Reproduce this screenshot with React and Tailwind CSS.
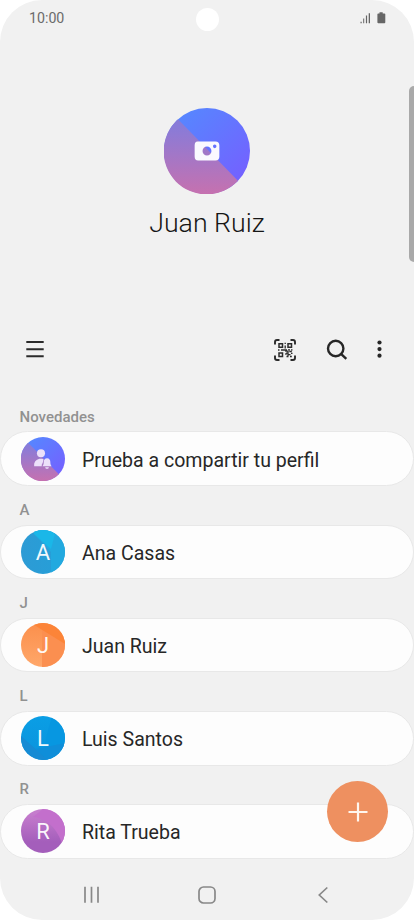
import React from 'react';

const BlueAvatar = () => (
  <>
    <defs>
      <linearGradient id="profileBlue" x1="0" y1="0" x2="1" y2="1">
        <stop offset="0.1" stopColor="#5588ff" />
        <stop offset="0.85" stopColor="#7362ff" />
      </linearGradient>
      <linearGradient id="profilePink" x1="0" y1="0" x2="0" y2="1">
        <stop offset="0.1" stopColor="#897bd8" />
        <stop offset="1" stopColor="#c671af" />
      </linearGradient>
    </defs>
    <circle cx="43.5" cy="43.5" r="43.5" fill="url(#profileBlue)" />
    <path d="M14.2 11.4A43.5 43.5 0 1 0 74.8 73.7Z" fill="url(#profilePink)" />
  </>
);

const PersonAvatar = () => (
  <svg viewBox="0 0 87 87" className="h-full w-full">
    <BlueAvatar />
    <g fill="#ece0fa">
      <circle cx="39.5" cy="32" r="8" />
      <path d="M26 58v-3c0-7 6-12 13-12 2 0 4 .3 5.500 1-.5 4-1.500 8-3.500 11v3Z" />
      <path d="M51.500 42c-4.500 0-6.500 3.500-6.500 7.500 0 4-.5 5.500-2.500 8.500h18c-2-3-2.500-4.500-2.500-8.500 0-4-2-7.500-6.500-7.500Z" />
      <path d="M48 60h7c0 2-1.500 3-3.500 3s-3.500-1-3.500-3Z" />
    </g>
  </svg>
);

const sections = [
  { header: 'Novedades', name: 'Prueba a compartir tu perfil' },
  {
    header: 'A',
    name: 'Ana Casas',
    initial: 'A',
    color: 'bg-[linear-gradient(90deg,#2d9bd5,#259fd8)]',
    facets: [
      { d: 'M13 4 30 22 30 44H44V0H13Z', fill: '#22a9df' },
      { d: 'M13 4 30 19 35 0H13Z', fill: '#1ab7e8' },
    ],
  },
  {
    header: 'J',
    name: 'Juan Ruiz',
    initial: 'J',
    color: 'bg-[linear-gradient(180deg,#fb8f4c,#ffa76a)]',
    facets: [
      { d: 'M21 6V44H44V18Z', fill: '#fb8f50' },
      { d: 'M10 0 44 21V0Z', fill: '#fc8438' },
    ],
  },
  {
    header: 'L',
    name: 'Luis Santos',
    initial: 'L',
    color: 'bg-[linear-gradient(180deg,#0a9ee5,#0b93dc)]',
    facets: [
      { d: 'M31 0 25 22 22 44H44V0Z', fill: '#0797e1' },
      { d: 'M0 20 27 44H0Z', fill: '#168bd4' },
      { d: 'M15 33Q30 30 44 27V44H27Z', fill: '#0f8ed9' },
    ],
  },
  {
    header: 'R',
    name: 'Rita Trueba',
    initial: 'R',
    color: 'bg-[linear-gradient(180deg,#c57ccd_10%,#a45ebb_75%)]',
    facets: [{ d: 'M12 8Q32 10 41 34L44 30V0H22Z', fill: '#c36fcc' }],
  },
];

const ContactSection = ({ header, name, initial, color, facets }) => (
  <section className="h-[93.2px]">
    <h2 className="h-[39.2px] pt-[14.300px] pl-[19.500px] text-[15px] leading-5 font-medium text-[#919191]">
      {header}
    </h2>
    <div className="flex h-[54.500px] items-center rounded-full border border-[#e8e8e8] bg-[#fdfdfd] pl-[20px]">
      {initial ? (
        <div className={`grid size-[44px] shrink-0 overflow-hidden rounded-full ${color}`}>
          <svg viewBox="0 0 44 44" className="col-start-1 row-start-1 size-full">
            {facets.map((facet) => (
              <path key={facet.d} d={facet.d} fill={facet.fill} />
            ))}
          </svg>
          <span className="z-10 col-start-1 row-start-1 self-center pt-[2px] text-center text-[22px] leading-none text-white/95">
            {initial}
          </span>
        </div>
      ) : (
        <div className="size-[44px] shrink-0">
          <PersonAvatar />
        </div>
      )}
      <span className="ml-[17px] pt-[4px] text-[19.550px] leading-6 whitespace-nowrap text-[#272727]">{name}</span>
    </div>
  </section>
);

const QrIcon = () => (
  <svg width="24" height="24" viewBox="0 0 24 24" fill="none" stroke="#2b2b2b">
    <path
      d="M2 6.500V4a2 2 0 0 1 2-2H6.500M17.500 2H20a2 2 0 0 1 2 2V6.500M22 17.500V20a2 2 0 0 1-2 2H17.500M6.500 22H4a2 2 0 0 1-2-2V17.500"
      strokeWidth="1.900"
    />
    <path d="M6 5.800h3.500V9.300H6ZM15 5.800h3.500V9.300H15ZM6 15h3.500v3.500H6Z" strokeWidth="1.500" />
    <path
      d="M12.200 4.800v1.300M12.200 7.500v3M5 12h1.500M8 12h6M15 11.800h2M18 11.800h1.500M12.200 13.200h3M13 15.200h2M16.300 13.500h2.500M12.200 16h1.500M15 16.600h2.500M18 15.300h1.500M13.500 18.500h2M17 18.500h1.800M15 13v5"
      strokeWidth="1.300"
    />
  </svg>
);

const App = () => (
  <div className="h-[920px] w-[414px] overflow-hidden bg-white font-[Roboto,sans-serif]">
    <div className="relative flex h-full flex-col overflow-hidden rounded-[42px] bg-[#f1f1f1]">
      <header className="grid h-10 shrink-0 grid-cols-3 items-start px-[27px] pt-[7.500px]">
        <span className="pl-[2px] text-[14.200px] leading-5 text-[#6b6b6b]">10:00</span>
        <span className="size-[23px] justify-self-center rounded-full bg-white" />
        <svg width="26" height="12" viewBox="0 0 26 12" className="mt-[4px] mr-[1px] justify-self-end" fill="#666">
          <path d="M.5 9.700h1.200v1.500H.5ZM3.200 6.500h1v4.700h-1ZM5.900 3.500h1.200v7.700H5.900ZM8.700 1.300h1.300v9.900H8.700Z" />
          <path d="M19.500.3h3.200v1.100h1.700q.9 0 .9.900v8q0 .9-.9.900h-6.100q-.9 0-.9-.9v-8q0-.9.9-.9h1.200Z" />
        </svg>
      </header>

      <div className="flex h-[289px] shrink-0 flex-col items-center pt-[67.500px]">
        <svg width="86" height="86" viewBox="0 0 87 87">
          <BlueAvatar />
          <path
            fill="#faf9ff"
            fillRule="evenodd"
            d="M34 34h18q4 0 4 4v11q0 4-4 4H34.500q-3.500 0-3.500-4V38q0-4 3-4ZM43.500 39a4.500 4.500 0 1 0 0 9 4.500 4.500 0 0 0 0-9ZM51.300 37a1.800 1.800 0 1 0 0 3.600 1.800 1.800 0 0 0 0-3.600Z"
          />
        </svg>
        <h1 className="mt-[11px] text-[26.700px] leading-9 font-light whitespace-nowrap text-[#161616]">Juan Ruiz</h1>
      </div>

      <nav className="flex h-[63.300px] shrink-0 items-start pt-[8.500px] pr-[32px] pl-[26px]">
        <svg width="18" height="18" viewBox="0 0 18 18" className="mt-[2.500px] mr-auto" stroke="#2b2b2b" strokeWidth="1.900">
          <path d="M.3 2h17.400M.3 9.200h17.400M.3 16.300h17.400" />
        </svg>
        <QrIcon />
        <svg width="22" height="22" viewBox="0 0 22 22" className="mt-[1.500px] ml-[29px]" fill="none" stroke="#272727" strokeWidth="2.400">
          <circle cx="9.700" cy="9.500" r="7.700" />
          <path d="m15 14.800 5.300 5" />
        </svg>
        <svg width="6" height="20" viewBox="0 0 6 20" className="mt-[2.500px] ml-[28px]" fill="#272727">
          <circle cx="3.500" cy="2.500" r="2.100" />
          <circle cx="3.500" cy="9.100" r="2.100" />
          <circle cx="3.500" cy="15.700" r="2.100" />
        </svg>
      </nav>

      <main className="shrink-0">
        {sections.map((section) => (
          <ContactSection key={section.header} {...section} />
        ))}
      </main>

      <footer className="flex grow items-start pt-[27.500px] pl-[83px]">
        <svg width="17" height="18" viewBox="0 0 17 18" stroke="#888" strokeWidth="1.700">
          <path d="M2 .8v16M8.500.8v16M15 .8v16" />
        </svg>
        <svg width="18" height="18" viewBox="0 0 18 18" className="ml-[98px]" fill="none" stroke="#888" strokeWidth="1.700">
          <rect x="1" y="1" width="16" height="16" rx="4.500" />
        </svg>
        <svg width="12" height="18" viewBox="0 0 12 18" className="ml-[101px]" fill="none" stroke="#888" strokeWidth="1.700">
          <path d="M10.300 1.500 2.300 9l8 7.500" />
        </svg>
      </footer>

      {/* scrollbar thumb */}
      <div className="absolute top-[86px] right-0 h-[176px] w-[5px] rounded-l-full bg-[#a9a9a9]" />

      {/* floating add button */}
      <button className="absolute top-[781px] left-[327px] z-20 flex size-[61px] items-center justify-center rounded-full bg-[#ee9060]">
        <svg width="20" height="20" viewBox="0 0 20 20" stroke="#fff6ee" strokeWidth="2.200">
          <path d="M10 .5v19M.5 10h19" />
        </svg>
      </button>
    </div>
  </div>
);

export default App;
